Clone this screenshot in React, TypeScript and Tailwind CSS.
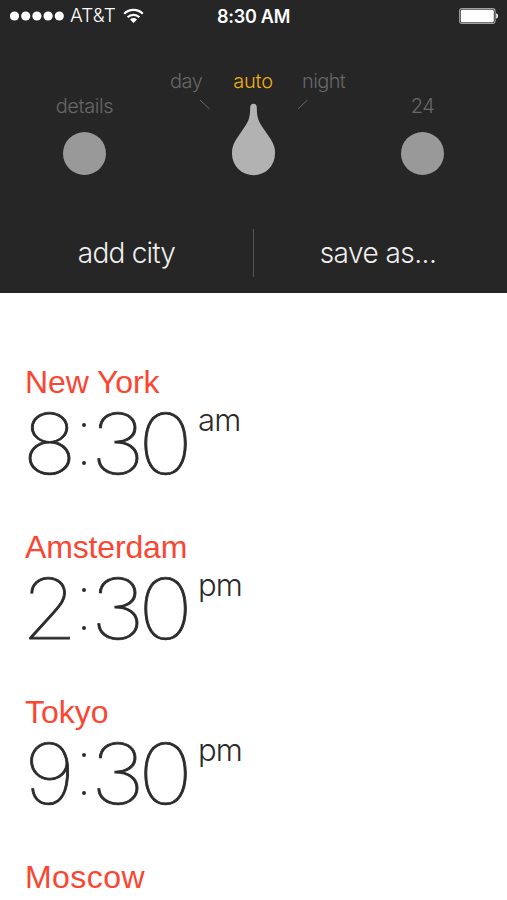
import React from "react";

const cities = [
  { name: "New York", hour: "8", minutes: ["3", "0"], period: "am", tracking: "tracking-[-0.1px]" },
  { name: "Amsterdam", hour: "2", minutes: ["3", "0"], period: "pm", tracking: "tracking-[-0.15px]" },
  { name: "Tokyo", hour: "9", minutes: ["3", "0"], period: "pm", tracking: "tracking-[0px]" },
  { name: "Moscow", hour: "", minutes: [], period: "", tracking: "tracking-[0.45px]" },
];

function StatusBar() {
  return (
    <div className="grid h-8 grid-cols-3 items-center text-white">
      <div className="flex items-center pl-[10px]">
        <svg width="55" height="10" viewBox="0 0 55 10" fill="currentColor">
          <circle cx="4.5" cy="5" r="4.6" />
          <circle cx="15.7" cy="5" r="4.6" />
          <circle cx="26.9" cy="5" r="4.6" />
          <circle cx="38.1" cy="5" r="4.6" />
          <circle cx="49.3" cy="5" r="4.6" />
        </svg>
        <span className="mt-px ml-[5px] w-[46px] text-[19px] font-light tracking-[0.1px]">AT&amp;T</span>
        <svg className="ml-[7px]" width="21" height="16" viewBox="0 0 21 16" fill="none" stroke="currentColor" strokeWidth="2.2">
          <path d="M1.2 5.8a13.2 13.2 0 0 1 18.6 0" />
          <path d="M4.6 9.2a8.4 8.4 0 0 1 11.8 0" />
          <path d="M7 11.4a5 5 0 0 1 7 0L10.5 15z" fill="currentColor" stroke="none" />
        </svg>
      </div>
      <div className="text-center text-[18px] font-semibold tracking-[-0.25px]">8:30 AM</div>
      <div className="flex justify-end pr-[8px]">
        <svg width="40" height="16" viewBox="0 0 40 16">
          <rect x="0.6" y="0.6" width="35.5" height="14.8" rx="2.5" fill="none" stroke="#a3a3a3" strokeWidth="1.1" />
          <rect x="1.8" y="1.8" width="33" height="12.4" rx="1.5" fill="#fff" />
          <path d="M37.2 5.3c2.3.6 2.3 4.8 0 5.4z" fill="#fff" />
        </svg>
      </div>
    </div>
  );
}

function Knob({ label }: { label: string }) {
  return (
    <div className="flex w-[169px] flex-col items-center pt-[60px]">
      <span className="text-[20px] leading-7 font-light tracking-[-0.4px] text-[#666]">{label}</span>
      <div className="mt-3 size-[43px] rounded-full bg-[#999]" />
    </div>
  );
}

function ModeDial() {
  return (
    <div className="flex w-[169px] flex-col pt-[35px]">
      <div className="flex text-[20px] leading-7 font-light text-[#666]">
        <span className="w-[57px] shrink-0 pl-[1px] tracking-[-0.5px]">day</span>
        <span className="w-[54px] shrink-0 text-center tracking-[-0.2px] text-[#eeb012]">auto</span>
        <span className="w-[65px] shrink-0 pl-[22px] tracking-[-0.6px]">night</span>
      </div>
      <svg className="mt-1" width="169" height="78" viewBox="169 99 169 78">
        <path d="M200 100l9.5 9M307.5 100l-9.5 9" stroke="#666" strokeWidth="1" />
        <path
          d="M250.2 107.2c0-4.6 6.6-4.6 6.6 0C256.8 120 259.5 123 266.5 133S275 146 275 153.7a21.5 21.5 0 0 1-43 0C232 146 233.5 143 240.5 133S250.2 120 250.2 107.2z"
          fill="#b2b2b2"
        />
      </svg>
    </div>
  );
}

function Time({ hour, minutes, period }: { hour: string; minutes: string[]; period: string }) {
  return (
    <div className="flex text-[#2b2b2b]">
      <div className="flex h-[80px] text-[84px] leading-[88px] font-thin [-webkit-text-stroke:0.8px_#2b2b2b]">
        <span className="flex w-[49px] scale-x-[1.08] justify-center">{hour}</span>
        <span className="flex w-[19px] flex-col items-center gap-[34px] pt-[23px]">
          <i className="size-1 rounded-full bg-[#2b2b2b]" />
          <i className="size-1 rounded-full bg-[#2b2b2b]" />
        </span>
        {minutes.map((n, i) => (
          <span key={i} className="flex w-[48px] scale-x-[1.11] justify-center pl-px">{n}</span>
        ))}
      </div>
      <span className="ml-[9px] text-[31px] leading-10 font-light tracking-[-0.8px]">{period}</span>
    </div>
  );
}

export default function App() {
  return (
    <div className="flex h-[900px] w-full flex-col overflow-hidden bg-white font-['Inter','Liberation_Sans',sans-serif]">
      <header className="flex h-[293px] shrink-0 flex-col bg-[#262626]">
        <StatusBar />
        <div className="flex h-[197px]">
          <Knob label="details" />
          <ModeDial />
          <Knob label="24" />
        </div>
        <div className="flex h-12 items-center text-[28px] font-light text-[#eee]">
          <button className="w-[253px] tracking-[-0.8px]">add city</button>
          <div className="h-12 w-px bg-[#555]" />
          <button className="w-[248px] tracking-[-0.55px]">save as...</button>
        </div>
      </header>
      <main className="flex flex-col pt-[71px]">
        {cities.map((city) => (
          <section key={city.name} className="h-[165px] shrink-0 pl-[25px]">
            <h2 className={`font-['Liberation_Sans',Arial,sans-serif] text-[32px] leading-9 text-[#fa4632] ${city.tracking}`}>
              {city.name}
            </h2>
            {city.hour && <Time hour={city.hour} minutes={city.minutes} period={city.period} />}
          </section>
        ))}
      </main>
    </div>
  );
}
